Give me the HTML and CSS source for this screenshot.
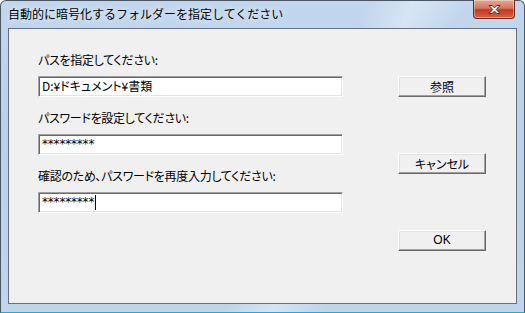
FILE: index.html
```html
<!DOCTYPE html>
<html lang="ja">
<head>
  <meta charset="UTF-8" />
  <title>自動的に暗号化するフォルダーを指定してください</title>
  <link rel="stylesheet" href="styles.css">
</head>
<body>

  <div class="window">
    <div class="titlebar">
      <span class="title">自動的に暗号化するフォルダーを指定してください</span>
      <button class="close-btn" aria-label="閉じる">
        <svg width="17" height="11" viewBox="0 0 17 11">
          <path d="M3 1.5h3.2l2.3 2.4 2.3-2.4H14l-3.8 4 3.8 4h-3.2L8.5 7.1 6.2 9.5H3l3.8-4z"
                fill="#fff" stroke="#3d3d3d" stroke-width="1" stroke-linejoin="round" />
        </svg>
      </button>
    </div>

    <div class="client">
      <div class="fields">
        <label class="field-label">パスを指定してください:</label>
        <div class="textbox">D:¥ドキュメント¥書類</div>

        <label class="field-label">パスワードを設定してください:</label>
        <div class="textbox mask">*********</div>

        <label class="field-label">確認のため、パスワードを再度入力してください:</label>
        <div class="textbox mask">*********<span class="caret"></span></div>
      </div>

      <div class="buttons">
        <button class="push-btn">参照</button>
        <button class="push-btn cancel">キャンセル</button>
        <button class="push-btn ok">OK</button>
      </div>
    </div>
  </div>

</body>
</html>
```

FILE: styles.css
```css
html, body {
  margin: 0;
  padding: 0;
}

body {
  width: 525px;
  height: 313px;
  overflow: hidden;
  font-family: "Noto Sans CJK JP", "DejaVu Sans", sans-serif;
  font-size: 12px;
  color: #000;
  background: #fff;
}

.window {
  box-sizing: border-box;
  width: 525px;
  height: 313px;
  padding: 0 7px 8px 7px;
  border: 1px solid #4a5663;
  border-bottom-color: #2aa6d6;
  border-radius: 6px 6px 0 0;
  background:
    linear-gradient(115deg, rgba(255,255,255,0) 55%, rgba(255,255,255,0.35) 62%, rgba(255,255,255,0) 70%),
    linear-gradient(to bottom, #c2d7ed 0%, #b9d1ea 40%, #bfd5ec 100%);
  display: flex;
  flex-direction: column;
}

.titlebar {
  height: 27px;
  display: flex;
  align-items: flex-start;
  justify-content: space-between;
}

.title {
  margin-top: 4px;
  line-height: 18px;
  font-size: 12px;
  color: #000;
  text-shadow: 0 0 6px rgba(255,255,255,0.9);
}

.close-btn {
  width: 42px;
  height: 19px;
  margin-top: -1px;
  margin-right: 2px;
  padding: 0;
  border: 1px solid #6b2b20;
  border-top: none;
  border-radius: 0 0 4px 4px;
  background: linear-gradient(to bottom, #e8a594 0%, #d6765d 45%, #c2391f 55%, #d2664d 100%);
  box-shadow: inset 0 0 0 1px rgba(255,255,255,0.35);
  display: flex;
  align-items: center;
  justify-content: center;
}

.client {
  flex: 1;
  background: #f0f0f0;
  border: 1px solid #66717d;
  display: flex;
  padding: 0 0 0 29px;
}

.fields {
  width: 305px;
  padding-top: 24px;
  display: flex;
  flex-direction: column;
}

.field-label {
  display: block;
  height: 14px;
  line-height: 14px;
  font-size: 12px;
  font-feature-settings: "palt";
  letter-spacing: -0.3px;
  margin-bottom: 9px;
  white-space: nowrap;
}

.textbox {
  box-sizing: border-box;
  height: 21px;
  background: #fff;
  border-style: solid;
  border-width: 1px;
  border-color: #a0a0a0 #fff #fff #a0a0a0;
  box-shadow: inset 1px 1px 0 #696969, inset -1px -1px 0 #e3e3e3;
  padding: 0 0 0 3px;
  line-height: 18px;
  font-size: 12px;
  font-feature-settings: "palt";
  white-space: nowrap;
  margin-bottom: 14px;
}

.textbox.mask {
  font-family: "DejaVu Sans", sans-serif;
  font-size: 12px;
  letter-spacing: -0.2px;
  line-height: 19px;
}

.caret {
  display: inline-block;
  width: 1px;
  height: 15px;
  margin-left: 1px;
  background: #000;
  vertical-align: -4px;
}

.buttons {
  margin-left: 55px;
  padding-top: 47px;
  display: flex;
  flex-direction: column;
}

.push-btn {
  box-sizing: border-box;
  width: 88px;
  height: 21px;
  padding: 0;
  font-family: "Noto Sans CJK JP", "DejaVu Sans", sans-serif;
  font-size: 12px;
  font-feature-settings: "palt";
  line-height: 17px;
  color: #000;
  background: #f0f0f0;
  border-style: solid;
  border-width: 1px;
  border-color: #fff #696969 #696969 #fff;
  box-shadow: inset -1px -1px 0 #a0a0a0, inset 1px 1px 0 #e3e3e3;
}

.push-btn.cancel {
  margin-top: 56px;
}

.push-btn.ok {
  margin-top: 56px;
  font-family: "Liberation Sans", sans-serif;
}
```
